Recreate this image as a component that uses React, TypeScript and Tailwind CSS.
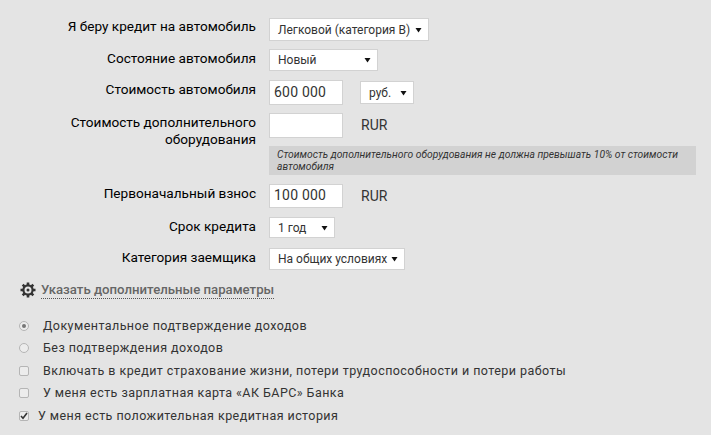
import { ReactNode } from 'react';

const Arrow = () => (
  <svg width="7" height="6" viewBox="0 0 7 6" className="shrink-0">
    <path d="M0.5 1h6L3.5 5.5z" fill="#111" />
  </svg>
);

const Select = ({ value, width, height }: { value: string; width: string; height: string }) => (
  <div
    className={`flex items-center justify-between border border-[#d2d2d2] bg-white pl-2 pr-[6px] text-[12px] text-[#333] ${width} ${height}`}
  >
    <span className="whitespace-nowrap">{value}</span>
    <Arrow />
  </div>
);

const Input = ({ value, height = 'h-[25px]' }: { value?: string; height?: string }) => (
  <div className={`flex w-[74px] items-center border border-[#d2d2d2] bg-white pb-[1px] pl-[4px] text-[14px] tracking-[0.2px] text-[#333] ${height}`}>
    {value}
  </div>
);

const Row = ({ label, className, children }: { label: ReactNode; className: string; children: ReactNode }) => (
  <div className={`flex ${className}`}>
    <div className="w-[256px] pt-[1px] text-right text-[13.6px] leading-[17px] text-black">{label}</div>
    <div className="ml-[13px] flex flex-col">{children}</div>
  </div>
);

const Radio = ({ checked }: { checked?: boolean }) => (
  <span className="flex h-[10px] w-[10px] items-center justify-center rounded-full border border-[#b5b5b5] bg-[#ececec]">
    {checked && <span className="h-[4px] w-[4px] rounded-full bg-[#777]" />}
  </span>
);

const Check = ({ checked }: { checked?: boolean }) => (
  <span className="flex h-[10px] w-[10px] items-center justify-center rounded-[2px] border border-[#b5b5b5] bg-[#ececec]">
    {checked && (
      <svg width="8" height="8" viewBox="0 0 8 8" className="shrink-0">
        <path d="M1 4l2 2.2L7 1" fill="none" stroke="#333" strokeWidth="1.6" />
      </svg>
    )}
  </span>
);

const Option = ({ box, text, className, boxWidth }: { box: ReactNode; text: string; className: string; boxWidth: string }) => (
  <div className={`flex h-[18px] items-center pl-[19px] text-[12.5px] tracking-[0.44px] text-[#333] ${className}`}>
    <span className={`flex ${boxWidth}`}>{box}</span>
    <span className="whitespace-nowrap">{text}</span>
  </div>
);

export default function App() {
  return (
    <div className="h-[435px] w-[711px] overflow-hidden bg-[#e4e4e4] pt-[17px] font-['Roboto',sans-serif]">
      <Row label="Я беру кредит на автомобиль" className="">
        <div className="mt-[1px]">
          <Select value="Легковой (категория В)" width="w-[160px]" height="h-[23px]" />
        </div>
      </Row>
      <Row label="Состояние автомобиля" className="mt-[8px]">
        <Select value="Новый" width="w-[109px]" height="h-[22px]" />
      </Row>
      <Row label="Стоимость автомобиля" className="mt-[9px]">
        <div className="flex items-center">
          <Input value="600 000" />
          <div className="ml-[17px]">
            <Select value="руб." width="w-[54px]" height="h-[23px]" />
          </div>
        </div>
      </Row>
      <Row
        label={
          <>
            Стоимость дополнительного
            <br />
            оборудования
          </>
        }
        className="mt-[8px]"
      >
        <div className="flex">
          <Input />
          <span className="ml-[18px] mt-[2px] text-[14px] text-[#333]">RUR</span>
        </div>
        <div className="mt-[8px] w-[427px] bg-[#d2d2d2] px-[8px] pb-[2px] pt-[3px] text-[10.3px] italic leading-[12px] text-[#333]">
          Стоимость дополнительного оборудования не должна превышать 10% от стоимости автомобиля
        </div>
      </Row>
      <Row label="Первоначальный взнос" className="mt-[9px]">
        <div className="flex">
          <Input value="100 000" height="h-[24px]" />
          <span className="ml-[18px] mt-[2px] text-[14px] text-[#333]">RUR</span>
        </div>
      </Row>
      <Row label="Срок кредита" className="mt-[9px]">
        <Select value="1 год" width="w-[66px]" height="h-[21px]" />
      </Row>
      <Row label="Категория заемщика" className="mt-[10px]">
        <Select value="На общих условиях" width="w-[136px]" height="h-[22px]" />
      </Row>
      <div className="ml-[20px] mt-[11px] flex h-[18px] items-center">
        <svg width="16" height="16" viewBox="0 0 16 16" className="shrink-0">
          <path
            d="M8 0.5v3M8 12.5v3M0.5 8h3M12.5 8h3M2.7 2.7l2.1 2.1M11.2 11.2l2.1 2.1M2.7 13.3l2.1-2.1M11.2 4.8l2.1-2.1"
            stroke="#333"
            strokeWidth="2.6"
          />
          <circle cx="8" cy="8" r="4.6" fill="none" stroke="#333" strokeWidth="2.2" />
          <circle cx="8" cy="8" r="1.5" fill="#333" />
        </svg>
        <span className="ml-[5px] border-b border-dotted border-[#555] text-[13.2px] font-medium leading-[17px] text-[#666]">
          Указать дополнительные параметры
        </span>
      </div>
      <Option box={<Radio checked />} boxWidth="w-[24px]" text="Документальное подтверждение доходов" className="mt-[18px]" />
      <Option box={<Radio />} boxWidth="w-[24px]" text="Без подтверждения доходов" className="mt-[4px]" />
      <Option box={<Check />} boxWidth="w-[24px]" text="Включать в кредит страхование жизни, потери трудоспособности и потери работы" className="mt-[5px]" />
      <Option box={<Check />} boxWidth="w-[24px]" text="У меня есть зарплатная карта «АК БАРС» Банка" className="mt-[4px]" />
      <Option box={<Check checked />} boxWidth="w-[19px]" text="У меня есть положительная кредитная история" className="mt-[5px]" />
    </div>
  );
}
